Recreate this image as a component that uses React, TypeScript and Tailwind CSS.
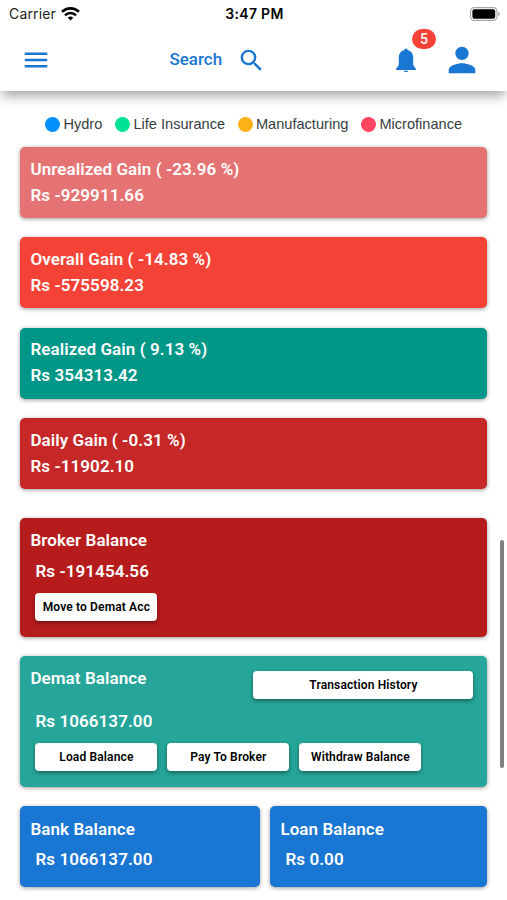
import React from 'react';
import { clsx } from 'clsx';
import { MdMenu, MdPerson, MdSearch } from 'react-icons/md';

// ===============================================
// DATA
// ===============================================

const legend = [
  { label: 'Hydro', dot: 'bg-[#008ffb]', width: 'w-[70px]' },
  { label: 'Life Insurance', dot: 'bg-[#00e396]', width: 'w-[122.5px]' },
  { label: 'Manufacturing', dot: 'bg-[#feb019]', width: 'w-[123.5px]' },
  { label: 'Microfinance', dot: 'bg-[#ff4560]', width: 'w-[110px]' },
];

const gains = [
  { title: 'Unrealized Gain ( -23.96 %)', amount: 'Rs -929911.66', color: 'bg-[#e57373]' },
  { title: 'Overall Gain ( -14.83 %)', amount: 'Rs -575598.23', color: 'bg-[#f44336]' },
  { title: 'Realized Gain ( 9.13 %)', amount: 'Rs 354313.42', color: 'bg-[#009688]' },
  { title: 'Daily Gain ( -0.31 %)', amount: 'Rs -11902.10', color: 'bg-[#c62828]' },
];

// ===============================================
// ICONS
// ===============================================

function WifiIcon() {
  return (
    <svg className="h-[14px] w-[19px]" viewBox="0 0 19 14" fill="none" stroke="#000" strokeWidth="2.6">
      <path d="M1 4.8a12.2 12.2 0 0 1 17 0" />
      <path d="M4 8.3a7.8 7.8 0 0 1 11 0" />
      <path d="M9.5 13.6 6.7 10.8a4 4 0 0 1 5.6 0Z" fill="#000" stroke="none" />
    </svg>
  );
}

function BatteryIcon() {
  return (
    <svg className="h-[14px] w-[31px]" viewBox="0 0 31 14">
      <rect x="0.6" y="0.6" width="26.4" height="12.8" rx="3.6" fill="#fff" stroke="#a6a6a6" strokeWidth="1.1" />
      <rect x="2.4" y="2.2" width="22.8" height="9.6" rx="2" fill="#000" />
      <path d="M28.3 4.8v4.4c.9-.3 1.6-1.2 1.6-2.2s-.7-1.9-1.6-2.2Z" fill="#a6a6a6" />
    </svg>
  );
}

function BellIcon() {
  return (
    <svg className="h-[24px] w-[20px]" viewBox="0 0 20 24" fill="currentColor">
      <path d="M10 .4c-.9 0-1.5.7-1.6 1.5C4.9 2.8 2.8 5.6 2.8 9.2v6.3c0 2-.8 3.2-2.6 4.8V22h19.6v-1.700c-1.800-1.600-2.600-2.800-2.600-4.800V9.200c0-3.600-2.100-6.400-5.600-7.300C11.500 1.100 10.900.4 10 .4Z" />
      <path d="M7.600 22.700h4.800c-.3.900-1.200 1.300-2.400 1.300s-2.100-.4-2.400-1.300Z" />
    </svg>
  );
}

// ===============================================
// STATUS BAR
// ===============================================

function StatusBar() {
  return (
    <div className="grid h-7 grid-cols-3 items-center pr-[6px] pl-[9px] font-[Inter,sans-serif] text-[14px] leading-none text-black">
      <div className="flex items-center gap-[5px]">
        <span className="tracking-[0.15px] text-[#222]">Carrier</span>
        <WifiIcon />
      </div>
      <span className="pr-[1px] text-center font-semibold tracking-[0.3px]">3:47 PM</span>
      <div className="flex justify-end pb-[1px]">
        <BatteryIcon />
      </div>
    </div>
  );
}

// ===============================================
// HEADER
// ===============================================

function Header() {
  return (
    <header className="h-[91px] bg-white shadow-[0_6px_12px_-2px_rgba(0,0,0,0.4)]">
      <StatusBar />
      <div className="flex h-16 items-center pr-[25px] pl-[21px] text-[#1976d2]">
        <button aria-label="Menu">
          <MdMenu className="size-[30px]" />
        </button>
        <button className="ml-[117.5px] flex items-center gap-[14px] text-[17px] font-medium">
          <span className="w-[54.5px] whitespace-nowrap">Search</span>
          <MdSearch className="size-[29px]" />
        </button>
        <button className="relative ml-auto" aria-label="Notifications">
          <BellIcon />
          <span className="absolute -top-[19px] left-[16px] flex h-[20px] w-[24px] items-center justify-center rounded-full bg-[#f44336] text-[14px] font-medium text-white">
            5
          </span>
        </button>
        <button className="ml-[26px]" aria-label="Account">
          <MdPerson className="size-[40px]" />
        </button>
      </div>
    </header>
  );
}

// ===============================================
// CARDS
// ===============================================

interface CardProps {
  className?: string;
  children: React.ReactNode;
}

function Card({ className, children }: CardProps) {
  return (
    <section
      className={clsx(
        'rounded-[5px] px-[10px] text-[17px] font-semibold tracking-[0.08px] text-white',
        'shadow-[0_1px_4px_rgba(0,0,0,0.4)]',
        className
      )}
    >
      {children}
    </section>
  );
}

function CardButton({ className, children }: CardProps) {
  return (
    <button
      className={clsx(
        'h-7 rounded-[4px] bg-white text-[12px] font-semibold tracking-[0.14px] whitespace-nowrap text-black',
        'shadow-[0_2px_4px_rgba(0,0,0,0.4)]',
        className
      )}
    >
      {children}
    </button>
  );
}

// ===============================================
// MAIN COMPONENT
// ===============================================

export default function App() {
  return (
    <div className="relative h-[900px] w-[507px] overflow-hidden bg-white font-[Roboto,sans-serif]">
      <Header />

      <main className="pr-[19.6px] pl-[20.4px]">
        <ul className="flex h-[56px] items-center pt-[11px] pl-[25px] font-['Liberation_Sans',sans-serif] text-[14.6px] text-[#373d3f]">
          {legend.map((item) => (
            <li key={item.label} className={clsx('flex items-center gap-[3px] whitespace-nowrap', item.width)}>
              <span className={clsx('size-[15px] shrink-0 rounded-full', item.dot)} />
              {item.label}
            </li>
          ))}
        </ul>

        <div className="flex flex-col gap-[19.4px]">
          {gains.map((gain) => (
            <Card key={gain.title} className={clsx('h-[71px] pt-[8.6px] leading-[26px]', gain.color)}>
              <h2>{gain.title}</h2>
              <p>{gain.amount}</p>
            </Card>
          ))}
        </div>

        <Card className="mt-[29px] h-[119px] bg-[#b71c1c] pt-[10px] leading-[25px]">
          <h2>Broker Balance</h2>
          <div className="pt-[6px] pl-[5px]">
            <p>Rs -191454.56</p>
            <CardButton className="mt-[9px] block w-[122px]">Move to Demat Acc</CardButton>
          </div>
        </Card>

        <Card className="mt-[19px] h-[131px] bg-[#26a69a] pt-[10px] leading-[25px]">
          <div className="flex justify-between pr-[4px]">
            <h2>Demat Balance</h2>
            <CardButton className="mt-[5px] w-[220px]">Transaction History</CardButton>
          </div>
          <div className="pt-[10px] pl-[5px]">
            <p>Rs 1066137.00</p>
            <div className="mt-[9px] flex gap-[10px]">
              <CardButton className="w-[122px]">Load Balance</CardButton>
              <CardButton className="w-[122px]">Pay To Broker</CardButton>
              <CardButton className="w-[122px]">Withdraw Balance</CardButton>
            </div>
          </div>
        </Card>

        <div className="mt-[19px] flex gap-[10px] leading-[25px]">
          <Card className="h-[81px] w-[240px] bg-[#1976d2] pt-[11px]">
            <h2>Bank Balance</h2>
            <p className="pt-[5px] pl-[5px]">Rs 1066137.00</p>
          </Card>
          <Card className="h-[81px] flex-1 bg-[#1976d2] pt-[11px]">
            <h2>Loan Balance</h2>
            <p className="pt-[5px] pl-[5px]">Rs 0.00</p>
          </Card>
        </div>
      </main>

      {/* Scroll indicator */}
      <div className="absolute top-[540px] right-[3px] h-[228px] w-[4px] rounded-full bg-[#7f7f7f]" />
    </div>
  );
}
